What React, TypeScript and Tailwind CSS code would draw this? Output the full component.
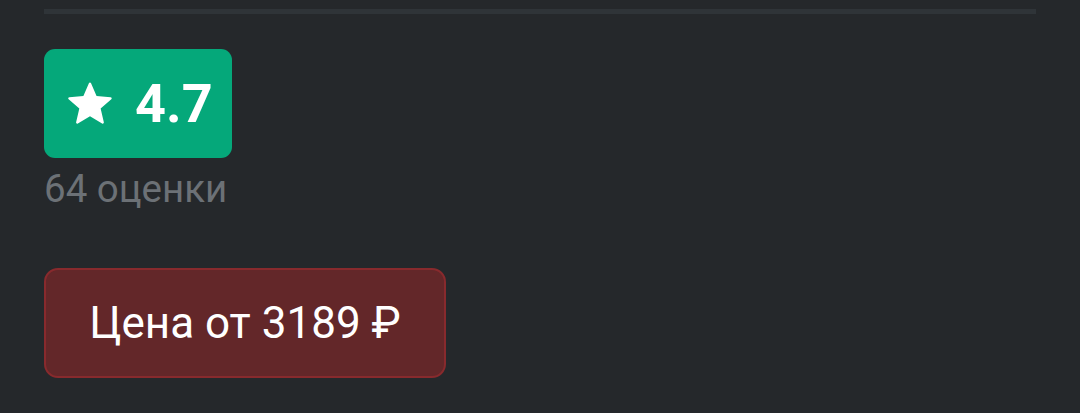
function StarIcon() {
  return (
    <svg viewBox="0 0 24 24" className="h-[56px] w-[56px] shrink-0" fill="#ffffff">
      <path d="M12 17.27l5.18 3.13c.38.23.85-.11.75-.54l-1.37-5.89 4.57-3.96c.33-.29.16-.84-.29-.88l-6.03-.51-2.36-5.56a.5.5 0 0 0-.92 0L9.17 8.62l-6.03.51c-.45.04-.62.59-.29.88l4.57 3.96-1.37 5.89c-.1.43.37.77.75.54z" />
    </svg>
  );
}

export default function App() {
  return (
    <div className="h-[413px] w-[1080px] overflow-hidden bg-[#25282b] px-[44px] pt-[9px] font-['Roboto',sans-serif]">
      <div className="h-[5px] w-full bg-[#2f3438]" />

      <div className="mt-[35px] inline-flex h-[109px] items-center gap-[17px] rounded-[11px] bg-[#05a87a] pl-[18px] pr-[19px]">
        <StarIcon />
        <span className="text-[54px] font-bold leading-none text-white">4.7</span>
      </div>

      <div className="mt-[8px] text-[38.5px] leading-[45px] text-[#6c7176]">64 оценки</div>

      <div className="mt-[57px] flex h-[110px] w-[402px] items-center justify-center rounded-[14px] border-[2.75px] border-[#882a2d] bg-[#632729]">
        <span className="text-[44px] leading-none text-white">Цена от 3189 ₽</span>
      </div>
    </div>
  );
}
